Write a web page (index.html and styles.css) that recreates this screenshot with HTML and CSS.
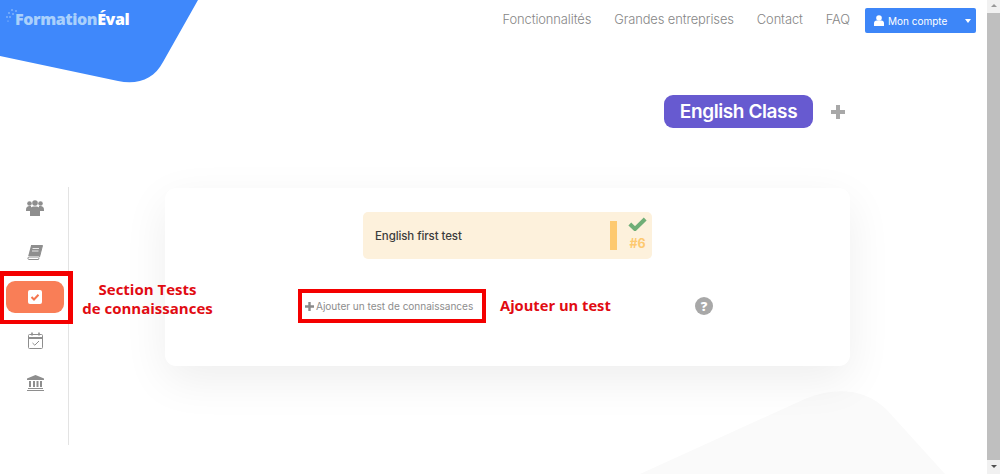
FILE: index.html
```html
<!DOCTYPE html>
<html lang="fr">
<head>
<meta charset="utf-8">
<title>FormationÉval</title>
<link rel="stylesheet" href="styles.css">
</head>
<body>
<div class="window">
  <div class="page">
    <svg class="blob" width="200" height="84" viewBox="0 0 200 84"><path d="M0 56 L118 81 C138 85 154 79 163 62 L198 0 L0 0 Z"/></svg>
    <svg class="bgshape" width="360" height="124" viewBox="0 0 360 124"><path d="M0 124 L167 48 C195 37 225 38 247 60 L305 124 Z"/></svg>
    <header class="topbar">
      <div class="logo"><svg class="sparks" width="12" height="16" viewBox="0 0 12 16"><g fill="#a9d0fb"><circle cx="6" cy="1" r=".8"/><circle cx="10" cy="2" r=".8"/><circle cx="3" cy="4" r=".8"/><circle cx="7" cy="5" r=".8"/><circle cx="1" cy="8" r=".8"/><circle cx="4" cy="8" r=".8"/><circle cx="2" cy="12" r=".6"/></g></svg><span class="logo-a">Formation</span><span class="logo-b">Éval</span></div>
      <nav class="nav">
        <a>Fonctionnalités</a>
        <a>Grandes entreprises</a>
        <a>Contact</a>
        <a>FAQ</a>
      </nav>
      <div class="account">
        <svg width="10" height="11" viewBox="0 0 10 11"><circle cx="5" cy="3" r="2.8" fill="#fff"/><path d="M0 11 V8 C0 6 2 5.500 3 5.500 H7 C8 5.500 10 6 10 8 V11 Z" fill="#fff"/></svg>
        <span class="account-label">Mon compte</span>
        <span class="caret"></span>
      </div>
    </header>
    <div class="classrow">
      <div class="classname">English Class</div>
      <svg class="plus" width="14" height="14" viewBox="0 0 14 14"><path d="M5 0 H9 V5 H14 V9 H9 V14 H5 V9 H0 V5 H5 Z" fill="#a8a8a8"/></svg>
    </div>
    <main class="content">
      <aside class="sidebar">
        <div class="side-item">
          <svg width="18" height="16" viewBox="0 0 18 16" fill="#8e8e8e"><circle cx="3.500" cy="3.500" r="2.300"/><circle cx="14.500" cy="3.500" r="2.300"/><circle cx="9" cy="3" r="2.800"/><path d="M0 10 C0 7 1.500 6 3.500 6 H5 V11 H0 Z"/><path d="M13 6 H14.500 C16.500 6 18 7 18 10 V11 H13 Z"/><path d="M4 16 V10 C4 7.500 6 6.500 7.500 6.500 H10.500 C12 6.500 14 7.500 14 10 V16 Z"/></svg>
        </div>
        <div class="side-item">
          <svg width="16" height="15" viewBox="0 0 16 15"><path d="M4 0.500 H15.500 L12.500 12 H2 C0.500 12 0.500 14.500 2 14.500 H11.500 L12 13" fill="none" stroke="#8e8e8e" stroke-width="1"/><path d="M4 0.500 H15.500 L12.800 11 H1.200 Z" fill="#8e8e8e"/><path d="M5.500 3.500 H12 M5 6 H11.500" stroke="#fff" stroke-width=".8"/></svg>
        </div>
        <div class="side-item side-active">
          <svg width="14" height="14" viewBox="0 0 14 14"><rect width="14" height="14" rx="2" fill="#fff"/><path d="M3.500 7 L6 9.500 L10.500 4.800" fill="none" stroke="#f5764f" stroke-width="2"/></svg>
        </div>
        <div class="side-item side-after">
          <svg width="15" height="17" viewBox="0 0 15 17" fill="none" stroke="#8e8e8e"><rect x=".5" y="2.500" width="14" height="14" rx="1"/><path d="M.5 6 H14.500" stroke-width="2"/><path d="M4 .5 V3.500 M11 .5 V3.500" stroke-width="1.600"/><path d="M4.500 11 L6.800 13.200 L11 9"/></svg>
        </div>
        <div class="side-item side-after">
          <svg width="17" height="16" viewBox="0 0 17 16" fill="#8e8e8e"><path d="M8.500 0 L17 3.500 V5 H0 V3.500 Z"/><path d="M2 6 H4 V12 H2 Z M6 6 H8 V12 H6 Z M9.500 6 H11.500 V12 H9.500 Z M13 6 H15 V12 H13 Z"/><path d="M1 13 H16 V14 H1 Z M0 15 H17 V16 H0 Z"/></svg>
        </div>
      </aside>
      <section class="card">
        <div class="test">
          <span class="test-name">English first test</span>
          <span class="test-bar"></span>
          <div class="test-meta">
            <svg width="19" height="14" viewBox="0 0 19 14"><path d="M1.800 7 L7 12 L17.200 2" fill="none" stroke="#6fae77" stroke-width="4"/></svg>
            <span class="test-num">#6</span>
          </div>
        </div>
        <div class="addrow">
          <div class="add">
            <svg width="9" height="9" viewBox="0 0 9 9"><path d="M3.300 0 H5.700 V3.300 H9 V5.700 H5.700 V9 H3.300 V5.700 H0 V3.300 H3.300 Z" fill="#8a8a8a"/></svg>
            <span>Ajouter un test de connaissances</span>
            <span class="mark mark-add"></span>
          </div>
          <span class="note note-add">Ajouter un test</span>
          <svg class="help" width="18" height="18" viewBox="0 0 18 18"><circle cx="9" cy="9" r="9" fill="#a8a8a8"/><text x="9" y="13.500" class="help-q">?</text></svg>
        </div>
      </section>
    </main>
    <span class="mark mark-side"></span>
    <p class="note note-side">Section Tests<br>de connaissances</p>
  </div>
  <div class="scrollbar">
    <span class="arrow arrow-up"></span>
    <span class="thumb"></span>
    <span class="arrow arrow-down"></span>
  </div>
</div>
</body>
</html>
```
FILE: styles.css
```css
* { box-sizing: border-box; }
html, body { margin: 0; height: 100%; overflow: hidden; background: #fff; }
body { font-family: Inter, "Liberation Sans", sans-serif; }
.window { display: flex; width: 1000px; height: 474px; }
.page { position: relative; flex: 1; min-width: 0; overflow: hidden; background: #fff; }

.blob { position: absolute; left: 0; top: 0; fill: #3f88fb; }
.bgshape { position: absolute; left: 640px; top: 350px; fill: #fafafa; }

.topbar { position: relative; display: flex; align-items: flex-start; height: 95px; padding: 8px 11px 0 13px; }
.logo { display: flex; align-items: baseline; height: 22px; margin-left: -7px; font-family: "Open Sans", sans-serif; font-weight: 800; font-size: 16px; letter-spacing: -.4px; line-height: 22px; }
.sparks { align-self: flex-start; margin-top: 1px; margin-right: -6px; }
.logo-a { color: #a9d0fb; margin-left: 3px; }
.logo-b { color: #fff; }
.nav { display: flex; gap: 23px; margin-left: auto; height: 22px; align-items: center; font-size: 12.900px; font-weight: 300; color: #868686; letter-spacing: -.1px; white-space: nowrap; }
.account { display: flex; align-items: center; width: 111px; height: 25px; margin-left: 15px; padding: 0 5px 0 9px; background: #3d86f8; border-radius: 2px; color: #fff; font-size: 10px; }
.account-label { margin-left: 4px; white-space: nowrap; }
.caret { margin-left: auto; width: 0; height: 0; border: 3.500px solid transparent; border-top: 4px solid #fff; border-bottom: 0; }

.classrow { position: relative; display: flex; align-items: center; height: 33px; padding-left: 664px; }
.classname { width: 149px; height: 33px; border-radius: 9px; background: #675ad0; color: #fff; font-size: 19px; font-weight: 600; letter-spacing: -.4px; line-height: 33px; text-align: center; white-space: nowrap; }
.plus { margin-left: 18px; }

.content { position: relative; display: flex; align-items: flex-start; margin-top: 59px; }
.sidebar { display: flex; flex-direction: column; width: 69px; height: 258px; border-right: 1px solid #e3e3e3; padding: 0 4px 0 6px; }
.side-item { display: flex; align-items: center; justify-content: center; flex: none; height: 32px; margin-top: 12px; border-radius: 9px; }
.side-item:first-child { margin-top: 5px; }
.side-active { margin-top: 13px; background: #f97e57; }
.side-after { margin-top: 11px; }

.card { width: 685px; height: 178px; margin: 1px 0 0 96px; padding-top: 24px; background: #fff; border-radius: 11px; box-shadow: 0 14px 45px rgba(0, 0, 0, .07); }
.test { display: flex; align-items: center; width: 289px; height: 47px; margin-left: 198px; padding: 0 0 0 12px; background: #fdf1dc; border-radius: 5px; }
.test-name { flex: 1; font-size: 11.500px; font-weight: 500; color: #3c3c3c; letter-spacing: -.1px; white-space: nowrap; }
.test-bar { width: 7px; height: 29px; background: #fdc970; }
.test-meta { display: flex; flex-direction: column; align-items: center; width: 29px; margin-left: 6px; margin-top: -4px; }
.test-num { font-size: 12.500px; font-weight: 700; color: #fdc970; line-height: 15px; margin-top: 5px; }

.addrow { display: flex; align-items: center; height: 34px; margin-top: 30px; }
.add { position: relative; display: flex; align-items: center; gap: 2px; margin-left: 133px; width: 188px; height: 34px; font-size: 10.100px; color: #8d8d8d; white-space: nowrap; letter-spacing: -.04px; }
.add svg { margin-left: 7px; }
.note { font-family: "Open Sans", sans-serif; font-weight: 700; color: #e10b12; margin: 0; }
.note-add { font-size: 14.700px; margin-left: 14px; margin-top: -2px; line-height: 20px; white-space: nowrap; }
.help { margin-left: 84px; }
.help-q { font-family: "Open Sans", sans-serif; font-size: 13px; font-weight: 800; fill: #fff; text-anchor: middle; }

.mark { position: absolute; border: 4px solid #f40000; pointer-events: none; }
.mark-add { left: 0; top: 0; width: 188px; height: 34px; }
.mark-side { left: 0; top: 271px; width: 73px; height: 53px; border-width: 5px 5px 4px 4px; }
.note-side { position: absolute; left: 74px; top: 280px; width: 147px; font-size: 15px; line-height: 19px; text-align: center; }

.scrollbar { display: flex; flex-direction: column; align-items: center; flex: none; width: 13px; height: 474px; background: #f1f1f1; }
.arrow { flex: none; width: 0; height: 0; border: 3px solid transparent; }
.arrow-up { margin-top: 4px; border-bottom: 3px solid #999; border-top: 0; }
.thumb { flex: 1; width: 100%; margin: 6px 0 5px; background: #bfbfbf; }
.arrow-down { margin-bottom: 6px; border-top: 3px solid #505050; border-bottom: 0; }
```
